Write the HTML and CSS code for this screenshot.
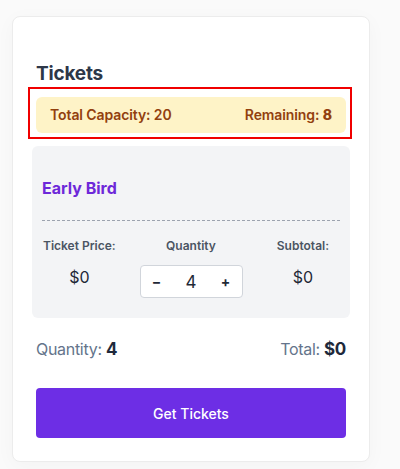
FILE: index.html
```html
<!DOCTYPE html>
<html lang="en">
<head>
<meta charset="utf-8">
<title>Tickets</title>
<link rel="stylesheet" href="styles.css">
</head>
<body>
<div class="card">
  <h2 class="title">Tickets</h2>
  <div class="capacity">
    <span>Total Capacity: 20</span>
    <span>Remaining: <b>8</b></span>
    <div class="highlight"></div>
  </div>
  <div class="tier">
    <div class="tier-name">Early Bird</div>
    <div class="tier-grid">
      <div class="col col-start">
        <div class="label">Ticket Price:</div>
        <div class="value">$0</div>
      </div>
      <div class="col col-mid">
        <div class="label">Quantity</div>
        <div class="stepper">
          <button class="step">&minus;</button>
          <span class="count">4</span>
          <button class="step">+</button>
        </div>
      </div>
      <div class="col col-end">
        <div class="label">Subtotal:</div>
        <div class="value">$0</div>
      </div>
    </div>
  </div>
  <div class="summary">
    <span class="sum-label">Quantity: <b>4</b></span>
    <span class="sum-label">Total: <b>$0</b></span>
  </div>
  <button class="cta">Get Tickets</button>
</div>
</body>
</html>
```

FILE: styles.css
```css
* { box-sizing: border-box; }
html, body { margin: 0; padding: 0; }
body {
  background: #fafafa;
  font-family: Inter, "Noto Sans", "Liberation Sans", sans-serif;
  width: 400px;
  height: 469px;
  overflow: hidden;
}
.card {
  margin: 16px 0 0 12px;
  width: 358px;
  background: #fff;
  border: 1px solid #ececec;
  border-radius: 8px;
  padding: 43px 23px 23px;
  box-shadow: 0 4px 20px rgba(0,0,0,0.03);
}
.title {
  margin: 0;
  font-size: 19px;
  line-height: 28px;
  font-weight: 700;
  color: #2d3748;
  letter-spacing: -0.2px;
}
.capacity {
  position: relative;
  margin-top: 9px;
  background: #fef3c7;
  border-radius: 6px;
  padding: 8px 14px;
  display: flex;
  justify-content: space-between;
  font-size: 14px;
  line-height: 20px;
  font-weight: 600;
  color: #92400e;
  letter-spacing: -0.1px;
}
.capacity b { font-weight: 800; }
.highlight {
  position: absolute;
  left: -8px;
  top: -10px;
  right: -6px;
  bottom: -6px;
  border: 2px solid #f00000;
  pointer-events: none;
}
.tier {
  margin: 13px -4px 0;
  background: #f3f4f6;
  border-radius: 6px;
  padding: 30px 10px 20px;
}
.tier-name {
  font-size: 16px;
  line-height: 24px;
  font-weight: 700;
  color: #6d28d9;
}
.tier-grid {
  margin-top: 20px;
  border-top: 1px dashed #9ca3af;
  padding-top: 16px;
  display: grid;
  grid-template-columns: 1fr 1fr 1fr;
}
.col {
  display: flex;
  flex-direction: column;
  align-items: center;
  gap: 10px;
}
.col-start { justify-self: start; padding-left: 1px; }
.col-mid { justify-self: center; }
.col-end { justify-self: end; padding-right: 11px; }
.label {
  font-size: 12px;
  line-height: 18px;
  font-weight: 600;
  color: #4b5563;
}
.value {
  font-size: 16px;
  line-height: 24px;
  color: #1f2937;
}
.stepper {
  width: 103px;
  height: 33px;
  background: #fff;
  border: 1px solid #d1d5db;
  border-radius: 4px;
  display: flex;
  align-items: center;
  justify-content: space-between;
  padding: 0 11px;
}
.step {
  border: 0;
  background: none;
  padding: 0;
  width: 10px;
  font-family: inherit;
  font-size: 14px;
  font-weight: 700;
  color: #1f2937;
}
.count {
  font-size: 17px;
  color: #1f2937;
}
.summary {
  margin-top: 19px;
  display: flex;
  justify-content: space-between;
  line-height: 24px;
}
.sum-label {
  font-size: 16px;
  color: #64748b;
  letter-spacing: -0.3px;
}
.sum-label b {
  font-size: 17px;
  font-weight: 700;
  color: #1e293b;
}
.cta {
  display: block;
  width: 100%;
  height: 50px;
  margin-top: 27px;
  border: 0;
  border-radius: 4px;
  background: #6d2ee5;
  color: #fff;
  font-family: inherit;
  font-size: 14px;
  font-weight: 500;
}
```
